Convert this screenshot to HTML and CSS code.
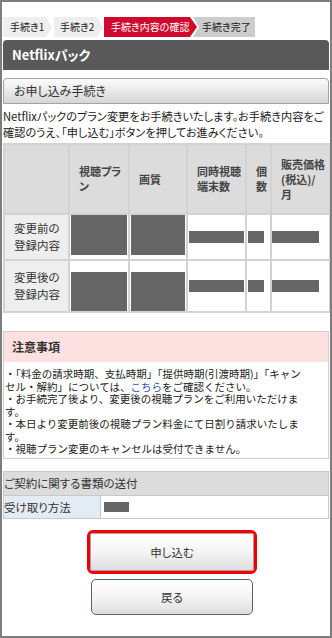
FILE: index.html
```html
<!DOCTYPE html>
<html lang="ja">
<head>
<meta charset="utf-8">
<title>Netflixパック</title>
<link rel="stylesheet" href="styles.css">
</head>
<body>
<div class="frame">
  <div class="steps">
    <div class="step step-done first">手続き1</div>
    <div class="step step-done">手続き2</div>
    <div class="step step-current">手続き内容の確認</div>
    <div class="step step-next">手続き完了</div>
  </div>

  <div class="page-title">Netflixパック</div>

  <div class="section-head">お申し込み手続き</div>
  <p class="lead">Netflixパックのプラン変更をお手続きいたします。お手続き内容をご確認のうえ、「申し込む」ボタンを押してお進みください。</p>

  <table class="plan">
    <colgroup>
      <col class="c1"><col class="c2"><col class="c3"><col class="c4"><col class="c5"><col class="c6">
    </colgroup>
    <tr class="hrow">
      <th></th>
      <th>視聴プラン</th>
      <th>画質</th>
      <th>同時視聴端末数</th>
      <th>個数</th>
      <th>販売価格(税込)/月</th>
    </tr>
    <tr class="r1">
      <th class="label">変更前の<br>登録内容</th>
      <td class="big"><span class="mask mask-big top"></span></td>
      <td class="big"><span class="mask mask-big top"></span></td>
      <td><span class="mask m4"></span></td>
      <td><span class="mask m5"></span></td>
      <td><span class="mask m6"></span></td>
    </tr>
    <tr class="r2">
      <th class="label">変更後の<br>登録内容</th>
      <td class="big"><span class="mask mask-big bottom"></span></td>
      <td class="big"><span class="mask mask-big bottom"></span></td>
      <td><span class="mask m4"></span></td>
      <td><span class="mask m5"></span></td>
      <td><span class="mask m6"></span></td>
    </tr>
  </table>

  <div class="notes">
    <div class="notes-head">注意事項</div>
    <ul class="notes-list">
      <li>・「料金の請求時期、支払時期」「提供時期(引渡時期)」「キャンセル・解約」については、<a href="#" class="link">こちら</a>をご確認ください。</li>
      <li>・お手続完了後より、変更後の視聴プランをご利用いただけます。</li>
      <li>・本日より変更前後の視聴プラン料金にて日割り請求いたします。</li>
      <li>・視聴プラン変更のキャンセルは受付できません。</li>
    </ul>
  </div>

  <table class="docs">
    <tr><th colspan="2" class="docs-head">ご契約に関する書類の送付</th></tr>
    <tr>
      <th class="docs-label">受け取り方法</th>
      <td class="docs-value"><span class="mask m-docs"></span></td>
    </tr>
  </table>

  <div class="actions">
    <div class="apply-ring"><button class="btn btn-apply">申し込む</button></div>
    <button class="btn btn-back">戻る</button>
  </div>
</div>
</body>
</html>
```

FILE: styles.css
```css
* { box-sizing: border-box; }
html, body { margin: 0; padding: 0; background: #fff; }
body {
  font-family: "Noto Sans CJK JP", "Noto Sans", sans-serif;
  font-feature-settings: "palt";
  color: #333;
}
.frame {
  width: 332px;
  height: 638px;
  border: 2px solid #7d7d7d;
  padding: 15px 1px 0 1px;
  overflow: hidden;
}

/* steps */
.steps { display: flex; height: 20px; }
.step {
  height: 20px;
  line-height: 20px;
  font-size: 10px;
  padding-left: 6px;
  white-space: nowrap;
}
.step-done {
  background: #eeeeee;
  color: #222;
  width: 49px;
  margin-right: 1px;
  clip-path: polygon(0 0, calc(100% - 6px) 0, 100% 50%, calc(100% - 6px) 100%, 0 100%);
}
.step-done.first { padding-left: 7px; margin-right: 2px; }
.step-current {
  background: #cf0a2c;
  color: #fff;
  width: 93px;
  padding-left: 7px;
  position: relative;
  z-index: 1;
  clip-path: polygon(0 0, calc(100% - 7px) 0, 100% 50%, calc(100% - 7px) 100%, 0 100%);
}
.step-next {
  background: #cccccc;
  color: #222;
  width: 62px;
  margin-left: -4px;
  padding-left: 9px;
  clip-path: polygon(0 0, 100% 0, 100% 100%, 0 100%, 6px 50%);
}

/* title */
.page-title {
  margin-top: 3px;
  height: 30px;
  line-height: 30px;
  background: #595959;
  border-radius: 4px 4px 0 0;
  color: #fff;
  font-weight: bold;
  font-size: 13px;
  padding-left: 9px;
}

.section-head {
  margin-top: 8px;
  height: 26px;
  line-height: 24px;
  border: 1px solid #a3a3a3;
  border-radius: 4px 4px 0 0;
  background: linear-gradient(#fbfbfb, #d6d6d6);
  font-size: 12px;
  color: #333;
  padding-left: 10px;
}
.lead {
  margin: 4px 0 3px 0;
  font-size: 11.2px;
  line-height: 16px;
  color: #222;
}

/* plan table */
.plan {
  width: 326px;
  border-collapse: collapse;
  table-layout: fixed;
  border: 2px solid #d2d2d2;
}
.plan .c1 { width: 65px; }
.plan .c2 { width: 60px; }
.plan .c3 { width: 58px; }
.plan .c4 { width: 59px; }
.plan .c5 { width: 25px; }
.plan .c6 { width: 59px; }
.plan th, .plan td {
  border: 2px solid #d2d2d2;
  padding: 0;
}
.hrow th {
  background: #dcdcdc;
  height: 70px;
  font-size: 11px;
  line-height: 15px;
  font-weight: bold;
  color: #444;
  text-align: left;
  padding: 0 4px 0 9px;
  vertical-align: middle;
}
.r1 > * { height: 46px; }
.r2 > * { height: 52px; }
.plan .label {
  background: #eeeeee;
  font-size: 11.5px;
  line-height: 17px;
  font-weight: normal;
  color: #333;
  text-align: left;
  padding-left: 9px;
}
.plan td { background: #fff; vertical-align: middle; }
.mask { display: block; background: #666666; }
.mask-big { margin: 0 1px; }
.r1 .mask-big { height: 40px; margin-top: -5px; }
.r2 .mask-big { height: 39px; margin-top: 11px; }
.m4 { height: 12px; margin: 0 1px 0 1px; }
.m5 { height: 12px; margin: 0 6px 0 1px; }
.m6 { height: 12px; margin: 0 10px 0 0; }

/* notes */
.notes {
  margin-top: 18px;
  border: 1px solid #cfcfcf;
}
.notes-head {
  background: #fde1e1;
  height: 30px;
  line-height: 30px;
  font-size: 12px;
  font-weight: bold;
  color: #333;
  padding-left: 8px;
}
.notes-list {
  list-style: none;
  margin: 0;
  padding: 6px 23px 2px 1px;
  font-size: 10.5px;
  line-height: 12.5px;
  font-feature-settings: normal;
  color: #222;
}
.link { color: #2a4fa8; text-decoration: none; }

/* docs */
.docs {
  margin-top: 12px;
  width: 326px;
  border-collapse: collapse;
  border: 1px solid #c8c8c8;
}
.docs th, .docs td { border: 1px solid #c8c8c8; padding: 0; }
.docs-head {
  background: #dcdcdc;
  height: 24px;
  font-size: 11.5px;
  font-weight: normal;
  text-align: left;
  padding-left: 4px;
  color: #333;
}
.docs-label {
  width: 97px;
  background: #e3ebf3;
  height: 23px;
  font-size: 11.5px;
  font-weight: normal;
  text-align: left;
  padding-left: 6px;
  color: #333;
}
.docs-value { padding-left: 3px !important; }
.m-docs { width: 25px; height: 10px; }

/* buttons */
.actions {
  display: flex;
  flex-direction: column;
  align-items: center;
  padding-left: 12px;
  margin-top: 11px;
}
.apply-ring {
  width: 170px;
  height: 44px;
  border: 3px solid #f00000;
  border-radius: 6px;
}
.btn {
  font-family: inherit;
  font-feature-settings: "palt";
  font-size: 11.5px;
  color: #333;
  cursor: pointer;
  background: linear-gradient(#ffffff 0%, #f4f4f4 50%, #dedede 100%);
}
.btn-apply {
  display: block;
  width: 100%;
  height: 100%;
  border: 1px solid #9aa3ad;
  border-radius: 3px;
}
.btn-back {
  margin-top: 5px;
  width: 162px;
  height: 36px;
  border: 1.5px solid #4f6681;
  border-radius: 5px;
}
```
